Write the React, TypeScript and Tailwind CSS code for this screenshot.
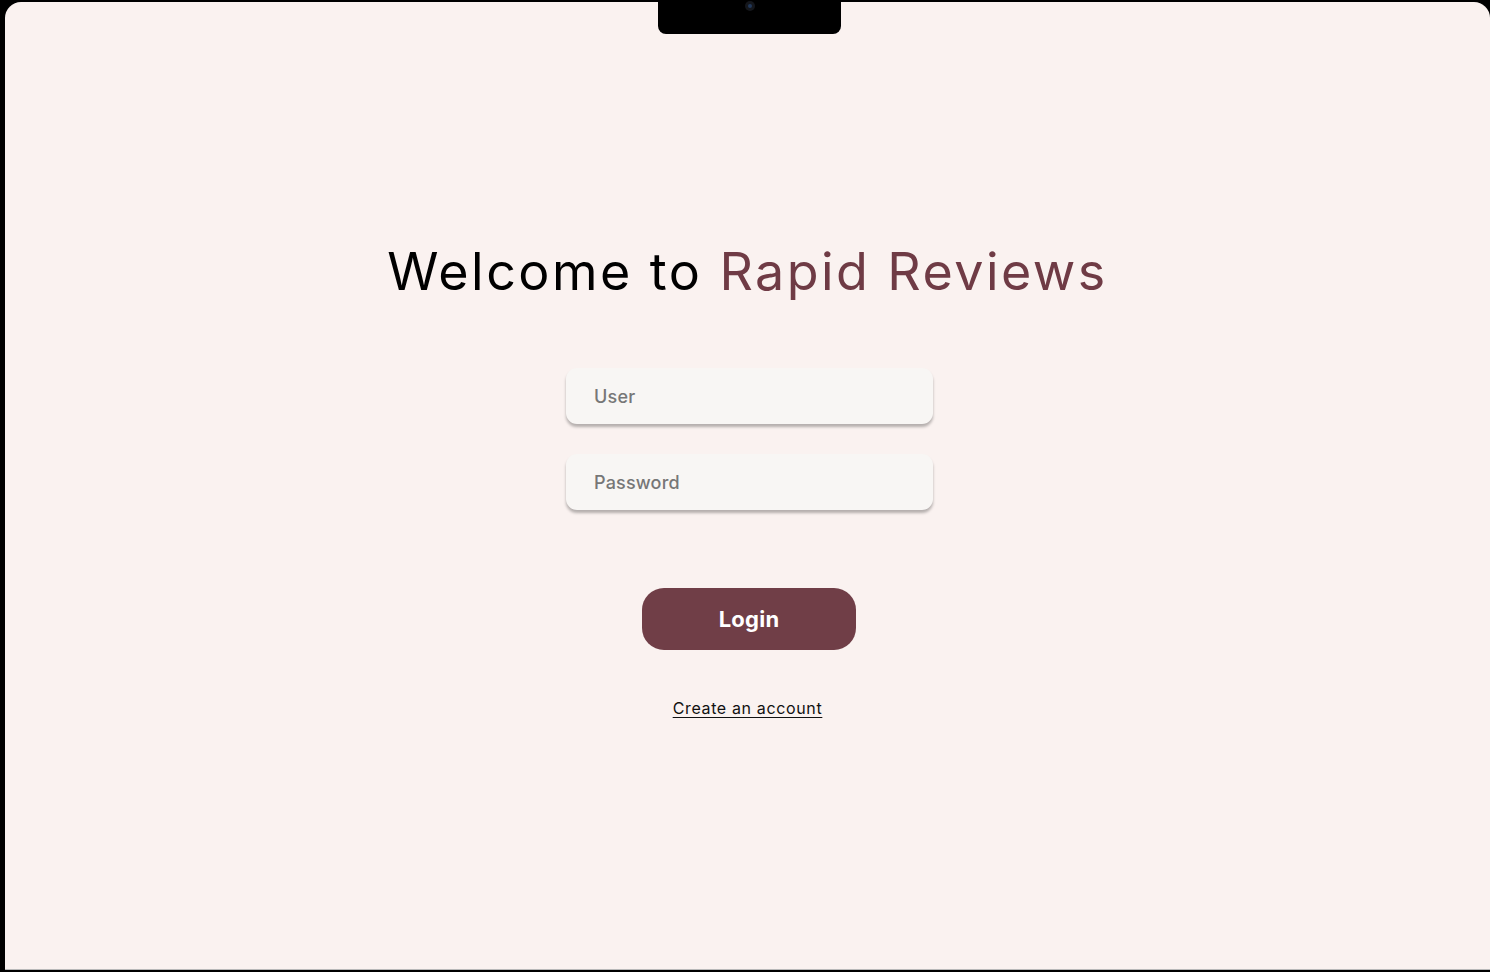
import React from "react";

const font = { fontFamily: "Inter, 'Noto Sans', sans-serif" };

function Field({ placeholder, type = "text" }: { placeholder: string; type?: string }) {
  return (
    <input
      type={type}
      placeholder={placeholder}
      className="w-[367px] h-[56px] rounded-[11px] bg-[#f8f6f4] pl-[28px] text-[18px] font-medium tracking-[0.01em] text-[#555] placeholder:text-[#777] outline-none shadow-[0_3px_3px_rgba(0,0,0,0.28)]"
    />
  );
}

export default function App() {
  return (
    <div className="w-[1490px] h-[972px] bg-black pl-[5px] pt-[2px] pb-[2px] flex flex-col" style={font}>
      <div className="relative flex-1 flex flex-col items-center rounded-t-[16px] bg-[#faf2f0] border-b border-[#b9b9b9]">
        {/* notch */}
        <div className="absolute -top-[2px] left-[653px] w-[183px] h-[34px] bg-black rounded-b-[8px] flex justify-center">
          <div className="mt-[1px] w-[10px] h-[10px] rounded-full bg-[#15171c] flex items-center justify-center">
            <div className="w-[4px] h-[4px] rounded-full bg-[#22385a]" />
          </div>
        </div>

        <h1 className="mt-[240px] text-[52px] leading-[60px] tracking-[0.047em] text-black font-normal">
          Welcome to <span className="text-[#6f3b45]">Rapid Reviews</span>
        </h1>

        <div className="mt-[66px] ml-[4px] flex flex-col gap-[30px]">
          <Field placeholder="User" />
          <Field placeholder="Password" type="password" />
        </div>

        <button className="mt-[78px] ml-[3px] w-[214px] h-[62px] rounded-[22px] bg-[#703e47] text-white text-[22px] font-bold tracking-[0.01em]">
          Login
        </button>

        <a href="#" className="mt-[46px] text-[16px] tracking-[0.04em] text-[#111] underline underline-offset-[3px]">
          Create an account
        </a>
      </div>
    </div>
  );
}
